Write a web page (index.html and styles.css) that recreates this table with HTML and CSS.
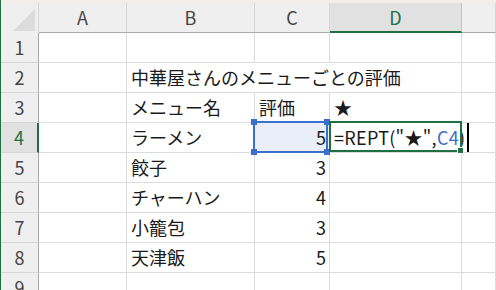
FILE: index.html
```html
<!DOCTYPE html>
<html lang="ja">
<head>
  <meta charset="UTF-8" />
  <title>中華屋さんのメニュー評価</title>
  <link rel="stylesheet" href="styles.css">
</head>
<body>

  <div class="window-edge"></div>

  <div class="sheet">
    <!-- column headers -->
    <div class="corner"><span class="corner-mark"></span></div>
    <div class="col-head">A</div>
    <div class="col-head">B</div>
    <div class="col-head">C</div>
    <div class="col-head active">D</div>
    <div class="col-head"></div>

    <div class="row-head">1</div>
    <div class="cell"></div><div class="cell"></div><div class="cell"></div><div class="cell"></div><div class="cell"></div>

    <div class="row-head">2</div>
    <div class="cell"></div>
    <div class="cell wide">中華屋さんのメニューごとの評価</div>
    <div class="cell"></div>

    <div class="row-head">3</div>
    <div class="cell"></div>
    <div class="cell">メニュー名</div>
    <div class="cell">評価</div>
    <div class="cell">★</div>
    <div class="cell"></div>

    <div class="row-head active">4</div>
    <div class="cell"></div>
    <div class="cell">ラーメン</div>
    <div class="cell num ref">5
      <span class="handle tl"></span><span class="handle tr"></span>
      <span class="handle bl"></span><span class="handle br"></span>
    </div>
    <div class="cell editing">=REPT("★",<span class="ref-text">C4</span>)<span class="caret"></span></div>
    <div class="cell"></div>

    <div class="row-head">5</div>
    <div class="cell"></div>
    <div class="cell">餃子</div>
    <div class="cell num">3</div>
    <div class="cell"></div><div class="cell"></div>

    <div class="row-head">6</div>
    <div class="cell"></div>
    <div class="cell">チャーハン</div>
    <div class="cell num">4</div>
    <div class="cell"></div><div class="cell"></div>

    <div class="row-head">7</div>
    <div class="cell"></div>
    <div class="cell">小籠包</div>
    <div class="cell num">3</div>
    <div class="cell"></div><div class="cell"></div>

    <div class="row-head">8</div>
    <div class="cell"></div>
    <div class="cell">天津飯</div>
    <div class="cell num">5</div>
    <div class="cell"></div><div class="cell"></div>

    <div class="row-head">9</div>
    <div class="cell"></div><div class="cell"></div><div class="cell"></div><div class="cell"></div><div class="cell"></div>
  </div>

</body>
</html>
```

FILE: styles.css
```css
/* === PAGE === */
body {
  margin: 0;
  height: 290px;
  overflow: hidden;
  background: #fff;
  border-left: 1px solid #1f6f43;
  font-family: "Noto Sans CJK JP", "Noto Sans", sans-serif;
  font-size: 18px;
  color: #1a1a1a;
}

.window-edge {
  height: 3px;
  background: #f2eee9;
}

/* === GRID === */
.sheet {
  display: grid;
  grid-template-columns: 38px 88px 128px 75px 132px 1fr;
  grid-auto-rows: 30px;
}

.sheet > div {
  box-sizing: border-box;
  line-height: 29px;
  white-space: nowrap;
}

/* === HEADERS === */
.corner,
.col-head,
.row-head {
  background: #efefef;
  color: #444;
  text-align: center;
}

.corner {
  position: relative;
  border-right: 1px solid #d6d6d6;
}

.corner-mark {
  position: absolute;
  left: 12px;
  top: 6px;
  width: 22px;
  height: 22px;
  background: #dcdcdc;
  clip-path: polygon(100% 0, 100% 100%, 0 100%);
}

.col-head {
  border-right: 1px solid #d6d6d6;
  border-bottom: 1px solid #a8a8a8;
}

.row-head {
  border-right: 1px solid #a8a8a8;
  border-bottom: 1px solid #d6d6d6;
}

.col-head.active {
  background: #e1e1e1;
  color: #1f6f43;
  border-right-color: #c4c4c4;
  border-bottom: 2px solid #1f6f43;
}

.row-head.active {
  background: #e1e1e1;
  color: #1f6f43;
  border-right: 2px solid #1f6f43;
}

/* === CELLS === */
.cell {
  border-right: 1px solid #dcdcdc;
  border-bottom: 1px solid #dcdcdc;
  padding: 0 4px;
}

.cell.wide {
  grid-column: span 3;
}

.cell.num {
  text-align: right;
  padding-right: 3px;
}

/* cell referenced by the formula */
.cell.ref {
  position: relative;
  background: #e9eef8;
}

.cell.ref::before {
  content: "";
  position: absolute;
  top: -2px;
  left: -2px;
  right: 1px;
  bottom: -1px;
  border: 2px solid #3a6fcb;
}

.handle {
  position: absolute;
  width: 6px;
  height: 6px;
  background: #3a6fcb;
}

.handle.tl { left: -4px; top: -4px; }
.handle.tr { right: -1px; top: -4px; }
.handle.bl { left: -4px; bottom: -3px; }
.handle.br { right: -1px; bottom: -3px; }

/* cell being edited */
.cell.editing {
  position: relative;
  z-index: 1;
  letter-spacing: 0.3px;
}

.cell.editing::before {
  content: "";
  position: absolute;
  top: -2px;
  left: -1px;
  right: -1px;
  bottom: 0;
  border: 2px solid #1f6f43;
  pointer-events: none;
}

.cell.editing::after {
  content: "";
  position: absolute;
  right: -3px;
  bottom: -2px;
  width: 5px;
  height: 5px;
  background: #1f6f43;
  border: 1px solid #fff;
}

.ref-text {
  color: #3a6fcb;
}

.caret {
  display: inline-block;
  width: 2px;
  height: 29px;
  margin-left: 2px;
  background: #000;
  vertical-align: top;
}
```
